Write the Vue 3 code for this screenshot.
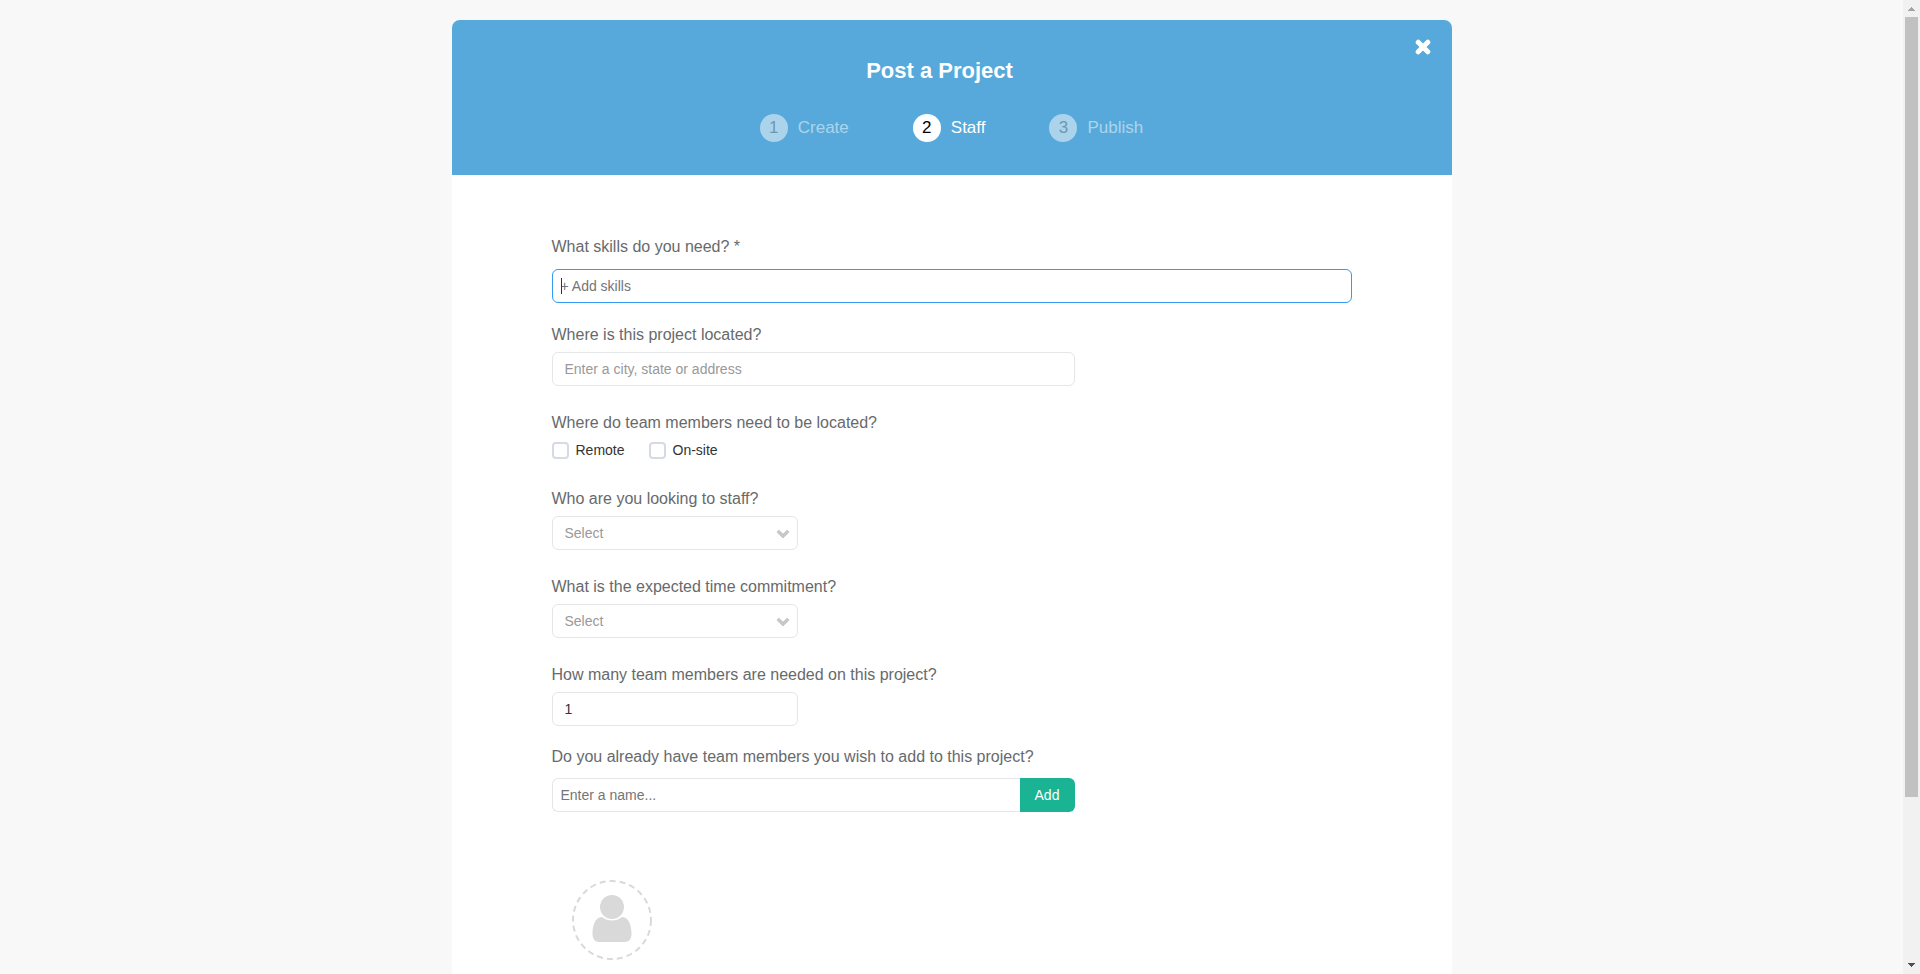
<script setup>
import { ref } from 'vue'

const steps = [
  { number: 1, name: 'Create' },
  { number: 2, name: 'Staff' },
  { number: 3, name: 'Publish' },
]
const current = 2
const skills = ref('')
const location = ref('')
const remote = ref(false)
const onsite = ref(false)
const staff = ref('')
const commitment = ref('')
const count = ref('1')
const member = ref('')
</script>

<template>
  <div class="window">
    <main class="page">
      <form class="card" @submit.prevent>
        <header class="header">
          <button class="close" type="button" aria-label="Close">
            <svg viewBox="0 0 16 16" width="16" height="16" aria-hidden="true">
              <path d="M3.2 3.2L12.8 12.8M12.8 3.2L3.2 12.8" stroke="#fff" stroke-width="5" stroke-linecap="round" />
            </svg>
          </button>
          <h1 class="title">Post a Project</h1>
          <ol class="steps">
            <li v-for="s in steps" :key="s.number" class="step" :class="{ active: s.number === current }">
              <span class="number">{{ s.number }}</span>
              <span>{{ s.name }}</span>
            </li>
          </ol>
        </header>

        <div class="body">
          <div class="field skills">
            <label for="skills">What skills do you need? *</label>
            <div class="caret-box">
              <input id="skills" v-model="skills" class="control tight focused" type="text" placeholder="+ Add skills" />
              <span class="caret" aria-hidden="true"></span>
            </div>
          </div>

          <div class="field medium">
            <label for="location">Where is this project located?</label>
            <input id="location" v-model="location" class="control" type="text" placeholder="Enter a city, state or address" />
          </div>

          <div class="field where" role="group" aria-labelledby="where">
            <span id="where" class="label">Where do team members need to be located?</span>
            <div class="checks">
              <label class="check"><input v-model="remote" type="checkbox" />Remote</label>
              <label class="check"><input v-model="onsite" type="checkbox" />On-site</label>
            </div>
          </div>

          <div class="field small">
            <label for="staff">Who are you looking to staff?</label>
            <div class="select">
              <select id="staff" v-model="staff" class="control"><option value="">Select</option></select>
              <svg class="chevron" viewBox="0 0 14 10" width="14" height="10" aria-hidden="true">
                <path d="M2.8 1.2L7 5.2L11.2 1.2L13.1 3.1L7 9L0.9 3.1Z" />
              </svg>
            </div>
          </div>

          <div class="field small">
            <label for="commitment">What is the expected time commitment?</label>
            <div class="select">
              <select id="commitment" v-model="commitment" class="control"><option value="">Select</option></select>
              <svg class="chevron" viewBox="0 0 14 10" width="14" height="10" aria-hidden="true">
                <path d="M2.8 1.2L7 5.2L11.2 1.2L13.1 3.1L7 9L0.9 3.1Z" />
              </svg>
            </div>
          </div>

          <div class="field small count">
            <label for="count">How many team members are needed on this project?</label>
            <input id="count" v-model="count" class="control" type="text" />
          </div>

          <div class="field medium members">
            <label for="member">Do you already have team members you wish to add to this project?</label>
            <div class="add-row">
              <input id="member" v-model="member" class="control tight" type="text" placeholder="Enter a name..." />
              <button class="add" type="button">Add</button>
            </div>
          </div>

          <div class="avatar">
            <svg viewBox="0 0 80 80" width="80" height="80" aria-hidden="true">
              <circle cx="40" cy="40" r="39" fill="none" stroke="#d9d9d9" stroke-width="2" stroke-dasharray="6 4.06" />
              <path d="M30 37C23 37 20.500 46 20.500 54C20.500 59 23 62 27 62H53C57 62 59.500 59 59.500 54C59.500 46 57 37 50 37C47 39.500 43.500 40.500 40 40.500C36.500 40.500 33 39.500 30 37Z" fill="#d9d9d9" />
              <circle cx="40" cy="27" r="12" fill="#d9d9d9" />
            </svg>
          </div>
        </div>
      </form>
    </main>

    <div class="scrollbar" aria-hidden="true">
      <svg viewBox="0 0 17 17" width="17" height="17"><path d="M8 7h1v1h1v1h1v1h1v1h-7v-1h1v-1h1v-1h1z" fill="#a3a3a3" /></svg>
      <div class="track"><div class="thumb"></div></div>
      <svg viewBox="0 0 17 17" width="17" height="17"><path d="M5 6h7v1h-1v1h-1v1h-1v1h-1v-1h-1v-1h-1v-1h-1z" fill="#505050" /></svg>
    </div>
  </div>
</template>

<style>
body {
  margin: 0;
  background: #f8f8f8;
}
</style>

<style scoped>
* {
  box-sizing: border-box;
}
.window {
  display: flex;
  height: 100vh;
  overflow: hidden;
  font-family: "Liberation Sans", Arial, sans-serif;
  font-size: 14px;
  color: #333;
}
.page {
  flex: 1;
  min-width: 0;
  padding: 20px 20px 0;
  overflow: hidden;
}
.card {
  max-width: 1000px;
  min-height: 100%;
  margin: 0 auto;
  background: #fff;
  border-radius: 8px 8px 0 0;
}
.header {
  position: relative;
  padding: 37px 24px 33px 0;
  background: #56a9da;
  border-radius: 8px 8px 0 0;
  color: #fff;
}
.close {
  position: absolute;
  top: 19px;
  right: 21px;
  display: flex;
  padding: 0;
  border: 0;
  background: none;
  cursor: pointer;
}
.title {
  margin: 0;
  font-size: 22px;
  line-height: 28px;
  text-align: center;
}
.steps {
  display: flex;
  justify-content: center;
  gap: 64px;
  margin: 29px -24px 0 0;
  padding: 0;
  list-style: none;
  font-size: 17px;
  line-height: 28px;
}
.step {
  display: flex;
  gap: 10px;
  opacity: 0.5;
}
.step.active {
  opacity: 1;
}
.number {
  width: 28px;
  height: 28px;
  border-radius: 50%;
  background: #fff;
  color: #888;
  text-align: center;
}
.active .number {
  color: #000;
}
.body {
  padding: 61px 10% 40px;
}
.field {
  display: flex;
  flex-direction: column;
  gap: 6px;
  margin-bottom: 26px;
}
.field > label,
.label {
  font-size: 16px;
  line-height: 22px;
  color: #676a6c;
  white-space: nowrap;
}
.skills {
  gap: 11px;
  margin-bottom: 21px;
}
.medium {
  max-width: 523px;
}
.small {
  max-width: 246px;
}
.where {
  margin-bottom: 28px;
}
.count {
  margin-bottom: 20px;
}
.members {
  gap: 10px;
  margin-bottom: 68px;
}
.control {
  display: block;
  width: 100%;
  height: 34px;
  padding: 0 12px;
  border: 1px solid #e5e6e7;
  border-radius: 6px;
  outline: 0;
  background: #fff;
  color: #333;
  font: inherit;
}
.control::placeholder {
  color: #999;
  opacity: 1;
}
.tight {
  padding: 0 8px;
}
.tight::placeholder {
  color: #757575;
}
.focused {
  border-color: #3399f3;
}
.caret-box,
.select {
  position: relative;
}
.caret {
  position: absolute;
  top: 9px;
  left: 9px;
  width: 1px;
  height: 16px;
  background: #333;
}
.checks {
  display: flex;
  gap: 24px;
  height: 20px;
  align-items: center;
}
.check {
  display: flex;
  align-items: center;
  gap: 7px;
}
.check input {
  appearance: none;
  width: 17px;
  height: 17px;
  margin: 0;
  border: 2px solid #d5dae5;
  border-radius: 4px;
  background: #fff;
}
.check input:checked {
  background: #56a9da;
}
select.control {
  appearance: none;
  color: #999;
}
.chevron {
  position: absolute;
  top: 13px;
  right: 8px;
  fill: #c7c7c7;
  stroke: #c7c7c7;
  stroke-linejoin: round;
  stroke-width: 1px;
  pointer-events: none;
}
.add-row {
  display: flex;
}
.add-row .control {
  flex: 1;
  border-right: 0;
  border-radius: 6px 0 0 6px;
}
.add {
  width: 55px;
  padding: 0;
  border: 0;
  border-radius: 0 6px 6px 0;
  background: #1ab394;
  color: #fff;
  font: inherit;
}
.avatar {
  display: flex;
  padding-left: 20px;
}
.scrollbar {
  display: flex;
  flex-direction: column;
  flex: 0 0 17px;
  background: #f1f1f1;
}
.track {
  flex: 1;
  padding: 0 2px;
}
.thumb {
  height: 83%;
  background: #c1c1c1;
}
</style>
